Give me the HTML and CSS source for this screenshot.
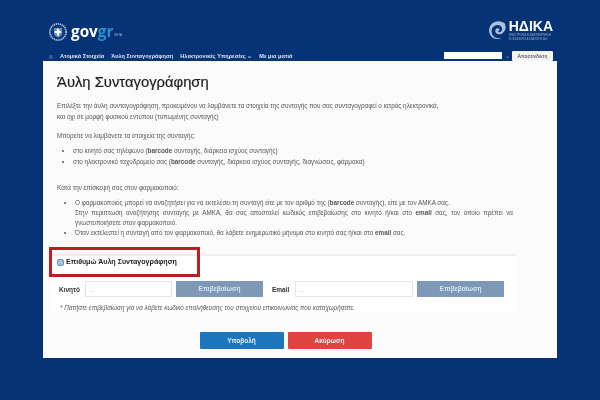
FILE: index.html
```html
<!DOCTYPE html>
<html lang="el">
<head>
    <meta charset="UTF-8">
    <meta name="viewport" content="width=device-width, initial-scale=1.0">
    <title>Άυλη Συνταγογράφηση</title>
    <link rel="stylesheet" href="styles.css">
</head>
<body>

    <header class="top">
        <div class="brand-row">
            <div class="gov-logo">
                <svg class="gov-emblem" width="18" height="18" viewBox="0 0 20 20">
                    <circle cx="10" cy="10" r="9" fill="none" stroke="#a9bcd6" stroke-width="2" stroke-dasharray="1.5 .7"/>
                    <circle cx="10" cy="10" r="7.200" fill="#0d3c7e"/>
                    <path d="M5.500 5.500h9v6c0 2.500-2.200 3.700-4.500 4.600-2.300-.9-4.500-2.100-4.500-4.600z" fill="#6d8ab5"/>
                    <path d="M8.800 6.500h2.400v2.300h2.300v2.400h-2.300v3h-2.400v-3h-2.300v-2.400h2.300z" fill="#fff"/>
                </svg>
                <span class="gov-word">gov<span class="gov-gr">gr</span></span>
                <span class="gov-beta">BETA</span>
            </div>
            <div class="hdika-logo">
                <svg width="20" height="22" viewBox="0 0 22 22">
                    <path d="M19 4.500C15 .5 8 .5 4 4.500c-4 4.500-3.500 11 .5 14.500 3 2.500 7.500 2.500 10 .5-3.500 1-7 .5-9-2.500C3 13 3.500 8.500 7 6.500c3-1.700 6.500-1 8 1.500 1 2 .5 4-1 5-1.300.8-3 .5-3.500-.8 1 .3 2-.2 2.200-1.200.2-1.500-1.500-2.500-3-1.800-2 1-2.300 3.800-.7 5.300 2 1.800 5.300 1.500 7.500-.5 3-2.800 3.500-6.500 2.500-7.500z" fill="#a9c1da"/>
                </svg>
                <div class="hdika-text">
                    <div class="hdika-name">ΗΔΙΚΑ</div>
                    <div class="hdika-sub">ΗΛΕΚΤΡΟΝΙΚΗ ΔΙΑΚΥΒΕΡΝΗΣΗ<br>ΚΟΙΝΩΝΙΚΗΣ ΑΣΦΑΛΙΣΗΣ Α.Ε.</div>
                </div>
            </div>
        </div>
        <nav class="nav-row">
            <ul class="nav-links">
                <li class="nav-home"></li>
                <li>Ατομικά Στοιχεία</li>
                <li>Άυλη Συνταγογράφηση</li>
                <li>Ηλεκτρονικές Υπηρεσίες ⌄</li>
                <li>Με μια ματιά</li>
            </ul>
            <div class="user-box">
                <div class="user-field"></div>
                <span class="user-caret">⌄</span>
                <div class="logout">Αποσύνδεση</div>
            </div>
        </nav>
    </header>

    <main class="card">
        <h1>Άυλη Συνταγογράφηση</h1>

        <p class="intro">Επιλέξτε την άυλη συνταγογράφηση, προκειμένου να λαμβάνετε τα στοιχεία της συνταγής που σας συνταγογραφεί ο ιατρός ηλεκτρονικά,<br>και όχι σε μορφή φυσικού εντύπου (τυπωμένης συνταγής)</p>

        <p class="lead">Μπορείτε να λαμβάνετε τα στοιχεία της συνταγής:</p>
        <ul class="info-list first-list">
            <li>στο κινητό σας τηλέφωνο (<b>barcode</b> συνταγής, διάρκεια ισχύος συνταγής)</li>
            <li>στο ηλεκτρονικό ταχυδρομείο σας (<b>barcode</b> συνταγής, διάρκεια ισχύος συνταγής, διαγνώσεις, φάρμακα)</li>
        </ul>

        <p class="lead visit">Κατά την επίσκεψή σας στον φαρμακοποιό:</p>
        <ul class="info-list second-list">
            <li>
                <div>Ο φαρμακοποιός μπορεί να αναζητήσει για να εκτελέσει τη συνταγή είτε με τον αριθμό της (<b>barcode</b> συνταγής), είτε με τον ΑΜΚΑ σας.</div>
                <div class="justified">Στην περίπτωση αναζήτησης συνταγής με ΑΜΚΑ, θα σας αποσταλεί κωδικός επιβεβαίωσης στο κινητό ή/και στο <b>email</b> σας, τον οποίο πρέπει να</div>
                <div>γνωστοποιήσετε στον φαρμακοποιό.</div>
            </li>
            <li>Όταν εκτελεστεί η συνταγή από τον φαρμακοποιό, θα λάβετε ενημερωτικό μήνυμα στο κινητό σας ή/και στο <b>email</b> σας.</li>
        </ul>

        <section class="opt-in">
            <div class="opt-head">
                <span class="check"></span>
                <span class="opt-title">Επιθυμώ Άυλη Συνταγογράφηση</span>
            </div>
            <div class="contact-row">
                <span class="field-label mobile-label">Κινητό</span>
                <div class="field mobile-field">...</div>
                <div class="btn-confirm">Επιβεβαίωση</div>
                <span class="field-label email-label">Email</span>
                <div class="field email-field">...</div>
                <div class="btn-confirm">Επιβεβαίωση</div>
            </div>
            <p class="note">* Πατήστε επιβεβαίωση για να λάβετε κωδικό επαλήθευσης του στοιχείου επικοινωνίας που καταχωρήσατε.</p>
        </section>

        <div class="actions">
            <div class="btn btn-submit">Υποβολή</div>
            <div class="btn btn-cancel">Ακύρωση</div>
        </div>
    </main>

</body>
</html>
```

FILE: styles.css
```css
html {
    background-color: #053375;
}

body {
    font-family: "Liberation Sans", Arial, sans-serif;
    color: #555;
    margin: 0;
    width: 600px;
    height: 400px;
    overflow: hidden;
    filter: blur(0.35px);
}

.top {
    padding: 23px 47px 0 49px;
    height: 38px;
}

.brand-row {
    display: flex;
    justify-content: space-between;
    align-items: flex-start;
    height: 27px;
}

.gov-logo {
    display: flex;
    align-items: center;
    color: #fff;
}

.gov-emblem {
    margin-right: 4px;
}

.gov-word {
    font-family: "Open Sans", sans-serif;
    font-size: 15.300px;
    line-height: 18px;
    font-weight: 700;
    margin-top: -2px;
}

.gov-gr {
    color: #2b8fd6;
}

.gov-beta {
    font-size: 3px;
    color: #9fb4d2;
    margin: 6px 0 0 1px;
}

.hdika-logo {
    display: flex;
    align-items: center;
    margin-top: -4px;
}

.hdika-name {
    font-size: 14px;
    line-height: 13px;
    font-weight: 700;
    color: #fff;
    margin-left: 1px;
}

.hdika-sub {
    font-size: 2.800px;
    line-height: 4px;
    color: #8fa8c8;
    margin-left: 1px;
    white-space: nowrap;
}

.nav-row {
    display: flex;
    justify-content: space-between;
    align-items: center;
    height: 11px;
}

.nav-links {
    display: flex;
    list-style: none;
    margin: 0;
    padding: 0;
    font-size: 5.600px;
    font-weight: 700;
    color: #dfe7f2;
}

.nav-links li {
    margin-right: 7px;
    white-space: nowrap;
}

.nav-home {
    width: 4px;
    height: 4px;
    margin-top: 2px;
    background-color: #2c5690;
}

.user-box {
    display: flex;
    align-items: center;
}

.user-field {
    width: 58px;
    height: 7px;
    background-color: #fff;
}

.user-caret {
    color: #9fb4d2;
    font-size: 6px;
    width: 10px;
    text-align: center;
}

.logout {
    width: 41px;
    height: 10px;
    line-height: 10px;
    background-color: #f4f4f4;
    color: #333;
    font-size: 5.200px;
    text-align: center;
    border-radius: 1px;
}

.card {
    background-color: #fbfbfb;
    width: 514px;
    height: 297px;
    margin-left: 43px;
    padding: 10px 0 0 0;
    box-sizing: border-box;
}

h1 {
    font-size: 14.800px;
    line-height: 22px;
    font-weight: 400;
    color: #1d1d1d;
    margin: 0 0 0 14px;
    -webkit-text-stroke: 0.2px #1d1d1d;
}

p {
    margin: 0;
}

.intro, .lead {
    font-size: 6.330px;
    line-height: 11px;
    margin-left: 14px;
    white-space: nowrap;
}

.intro {
    margin-top: 7px;
}

.lead {
    margin-top: 7.500px;
}

.visit {
    margin-top: 15px;
}

.info-list {
    font-size: 6.330px;
    padding: 0;
}

.first-list {
    line-height: 11px;
    margin: 4px 44px 0 30px;
    white-space: nowrap;
}

.second-list {
    line-height: 10px;
    margin: 5.500px 44px 0 32px;
}

.justified {
    text-align: justify;
    text-align-last: justify;
}

.opt-in {
    background-color: #fff;
    border-top: 2px solid #eee;
    margin: 16px 41px 0 9px;
    height: 58px;
    box-sizing: border-box;
    position: relative;
}

.opt-head {
    display: flex;
    align-items: center;
    position: absolute;
    left: -3px;
    top: -9px;
    width: 151px;
    height: 30px;
    border: 3px solid #b81e22;
    box-sizing: border-box;
    padding-left: 5px;
}

.check {
    width: 7px;
    height: 7px;
    box-sizing: border-box;
    border-radius: 2px;
    border: 1px solid #6f93ad;
    background-color: #a9c3d6;
    margin-right: 2px;
}

.opt-title {
    font-size: 7.100px;
    font-weight: 700;
    color: #222;
    white-space: nowrap;
}

.contact-row {
    display: flex;
    align-items: center;
    padding: 25px 0 0 7px;
}

.field-label {
    font-size: 6.500px;
    font-weight: 700;
    color: #333;
}

.mobile-label {
    width: 26px;
}

.email-label {
    width: 23px;
    margin-left: 9px;
}

.field {
    height: 16px;
    box-sizing: border-box;
    background-color: #fff;
    border: 1px solid #e6e6e6;
    color: #aaa;
    font-size: 6px;
    line-height: 16px;
    padding-left: 3px;
    margin-right: 4px;
}

.mobile-field {
    width: 87px;
}

.email-field {
    width: 118px;
}

.btn-confirm {
    width: 87px;
    height: 16px;
    line-height: 16px;
    background-color: #7e98b8;
    color: #dbe4ee;
    font-size: 6.500px;
    font-weight: 700;
    text-align: center;
}

.note {
    font-size: 6.300px;
    font-style: italic;
    margin: 6.500px 0 0 8px;
    white-space: nowrap;
}

.actions {
    display: flex;
    justify-content: center;
    gap: 4px;
    margin: 20px 0 0 -29px;
}

.btn {
    width: 84px;
    height: 17px;
    line-height: 17px;
    color: #e8eef5;
    font-size: 6.500px;
    font-weight: 700;
    text-align: center;
    border-radius: 1px;
}

.btn-submit {
    background-color: #1b76bd;
}

.btn-cancel {
    background-color: #e04440;
}
```
